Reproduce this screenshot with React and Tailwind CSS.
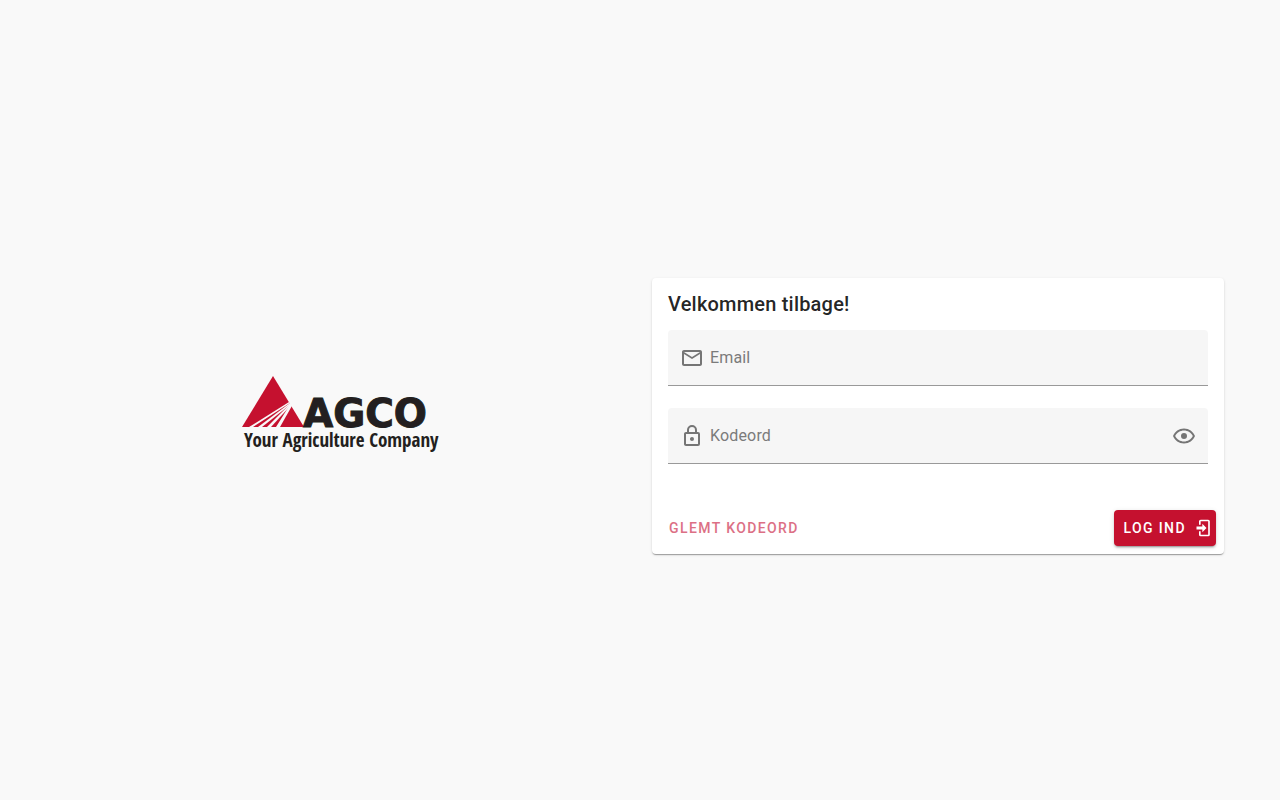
import React, { useState } from 'react';

// ─── Icons ────────────────────────────────────────────────────────────────────

const ICONS = {
  email: 'M22 6C22 4.9 21.1 4 20 4H4C2.9 4 2 4.9 2 6V18C2 19.1 2.9 20 4 20H20C21.1 20 22 19.1 22 18V6M20 6L12 11L4 6H20M20 18H4V8L12 13L20 8V18Z',
  lock: 'M12,17C10.89,17 10,16.1 10,15C10,13.89 10.89,13 12,13A2,2 0 0,1 14,15A2,2 0 0,1 12,17M18,20V10H6V20H18M18,8A2,2 0 0,1 20,10V20A2,2 0 0,1 18,22H6C4.89,22 4,21.1 4,20V10C4,8.89 4.89,8 6,8H7V6A5,5 0 0,1 12,1A5,5 0 0,1 17,6V8H18M12,3A3,3 0 0,0 9,6V8H15V6A3,3 0 0,0 12,3Z',
  eye: 'M12,9A3,3 0 0,1 15,12A3,3 0 0,1 12,15A3,3 0 0,1 9,12A3,3 0 0,1 12,9M12,4.5C17,4.5 21.27,7.61 23,12C21.27,16.39 17,19.5 12,19.5C7,19.5 2.73,16.39 1,12C2.73,7.61 7,4.5 12,4.5M3.18,12C4.83,15.36 8.24,17.5 12,17.5C15.76,17.5 19.17,15.36 20.82,12C19.17,8.64 15.76,6.5 12,6.5C8.24,6.5 4.83,8.64 3.18,12Z',
  login: 'M10,17V13.75H3V10.25H10V7L15,12L10,17M8,2H17A2,2 0 0,1 19,4V20A2,2 0 0,1 17,22H8A2,2 0 0,1 6,20V16H8V20H17V4H8V8H6V4A2,2 0 0,1 8,2Z',
};

function Icon({ name, className }) {
  return (
    <svg viewBox="0 0 24 24" fill="currentColor" aria-hidden="true" className={className}>
      <path d={ICONS[name]} />
    </svg>
  );
}

function Logo() {
  return (
    <svg viewBox="0 0 200 80" role="img" aria-label="AGCO" className="w-[200px] overflow-visible">
      <path d="M31 0L62 51H0Z" fill="#c5112f" />
      {/* furrows */}
      <g fill="#f9f9f9">
        <path d="M47 26L48 27L11 51H7Z" />
        <path d="M48 27L49 28L20 51H16Z" />
        <path d="M49 27L50 28L29 51H25Z" />
        <path d="M49 27L51 28L38 51H34Z" />
      </g>
      <text x="61" y="51" fontSize="39" fontWeight="700" fill="#231f20" stroke="#231f20" strokeWidth="1" className="font-['DejaVu_Sans',sans-serif]">AGCO</text>
      <text x="2" y="71" fontSize="19" fontWeight="700" fill="#231f20" className="font-['Open_Sans_Condensed',Roboto,sans-serif]">Your Agriculture Company</text>
    </svg>
  );
}

// ─── Form field ───────────────────────────────────────────────────────────────

function Field({ id, label, icon, children, ...props }) {
  return (
    <div className="flex h-14 items-center rounded-t border-b border-[#999] bg-[#f6f6f6] px-3 text-[#757575]">
      <label htmlFor={id} className="flex items-center gap-1.5 tracking-[0.01em] text-[#7b7b7b]">
        <Icon name={icon} className="size-6 text-[#757575]" />
        {label}
      </label>
      <input
        id={id}
        className="ml-2 h-full min-w-0 flex-1 bg-transparent text-base text-black/87 outline-none"
        {...props}
      />
      {children}
    </div>
  );
}

// ─── Page ─────────────────────────────────────────────────────────────────────

export default function App() {
  const [visible, setVisible] = useState(false);

  return (
    <main className="flex min-h-screen items-center bg-[#f9f9f9] pt-8 font-[Roboto,sans-serif]">
      <div className="mx-auto grid w-full max-w-[1192px] items-center md:grid-cols-2">
        <div className="flex justify-center p-3">
          <Logo />
        </div>

        <div className="p-3">
          <form
            onSubmit={e => e.preventDefault()}
            className="rounded bg-white shadow-[0_2px_1px_-1px_rgba(0,0,0,0.2),0_1px_1px_0_rgba(0,0,0,0.14),0_1px_3px_0_rgba(0,0,0,0.12)]"
          >
            <h1 className="px-4 py-2.5 text-xl leading-8 font-medium tracking-[0.01em] text-black/87">Velkommen tilbage!</h1>

            <div className="flex flex-col gap-[22px] px-4">
              <Field id="email" label="Email" icon="email" type="email" />
              <Field id="password" label="Kodeord" icon="lock" type={visible ? 'text' : 'password'}>
                <button type="button" aria-label="Vis kodeord" onClick={() => setVisible(!visible)}>
                  <Icon name="eye" className="size-6" />
                </button>
              </Field>
            </div>

            <div className="mt-[46px] flex items-center justify-between p-2 pt-0 text-sm font-medium tracking-widest">
              <a href="#glemt" className="px-[9px] text-[#dc7085]">GLEMT KODEORD</a>
              <button
                type="submit"
                className="flex h-9 items-center gap-2 rounded bg-[#c5112f] pr-0.5 pl-[9px] text-white shadow-[0_3px_1px_-2px_rgba(0,0,0,0.2),0_2px_2px_0_rgba(0,0,0,0.14),0_1px_5px_0_rgba(0,0,0,0.12)]"
              >
                LOG IND
                <Icon name="login" className="size-5" />
              </button>
            </div>
          </form>
        </div>
      </div>
    </main>
  );
}
